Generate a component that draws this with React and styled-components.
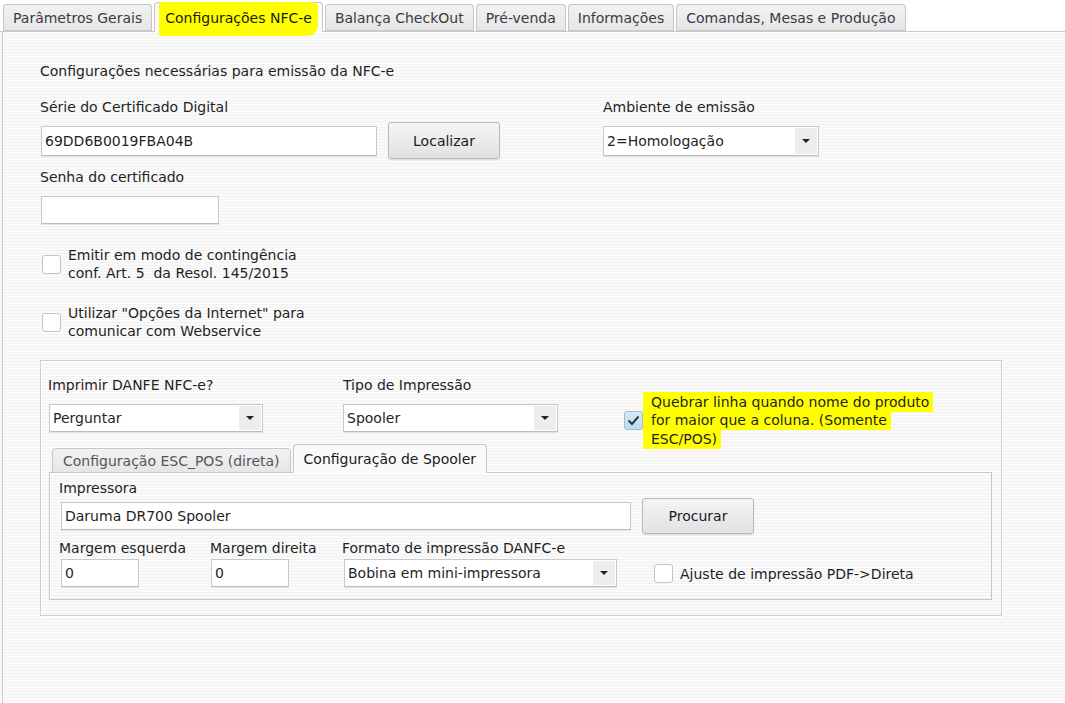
import React from 'react';
import styled, { createGlobalStyle } from 'styled-components';

const GlobalStyle = createGlobalStyle`
  html, body {
    margin: 0;
    padding: 0;
    height: 100%;
  }
  body {
    font-family: "DejaVu Sans", Verdana, sans-serif;
    font-size: 14px;
    color: #1f1f24;
    background: #f7f7f7;
    overflow: hidden;
  }
`;

const stripes = `repeating-linear-gradient(to bottom, #fafafa 0px, #fafafa 2px, #f2f2f2 2px, #f2f2f2 3px)`;

const Window = styled.div`
  width: 1065px;
  height: 703px;
  display: flex;
  flex-direction: column;
  background: ${stripes};
`;

const TabBar = styled.div`
  display: flex;
  align-items: flex-end;
  gap: 2px;
  height: 31px;
  padding-left: 3px;
  border-bottom: 1px solid #cacaca;
  background: #fff;
`;

const Tab = styled.div`
  position: relative;
  height: ${p => (p.$active ? '30px' : '27px')};
  margin-bottom: ${p => (p.$active ? '-1px' : '0')};
  padding: 0 ${p => (p.$active ? '10px' : '9px')};
  display: flex;
  align-items: center;
  border: 1px solid #c6c6c6;
  border-bottom: ${p => (p.$active ? 'none' : '1px solid #cacaca')};
  border-radius: 4px 4px 0 0;
  background: ${p => (p.$active ? '#fafafa' : 'linear-gradient(#f2f2f2, #e6e6e6)')};
  color: ${p => (p.$active ? '#1a1a1a' : '#3a3a44')};
  white-space: nowrap;
  box-sizing: border-box;
  z-index: ${p => (p.$active ? 2 : 1)};
`;

const Marker = styled.span`
  background: #ffff00;
  padding: 8px 6px 10px;
  margin: -8px -6px -10px;
  border-radius: 2px 6px 10px 3px;
  box-decoration-break: clone;
  -webkit-box-decoration-break: clone;
`;

const Panel = styled.div`
  flex: 1;
  margin-left: 2px;
  border-left: 1px solid #cacaca;
  padding: 30px 0 0 37px;
  display: flex;
  flex-direction: column;
  background: ${stripes};
`;

const Text = styled.div`
  line-height: 18px;
  white-space: nowrap;
  margin-bottom: ${p => p.$mb || 0}px;
`;

const TopArea = styled.div`
  display: flex;
  margin-top: 18px;
`;

const Column = styled.div`
  display: flex;
  flex-direction: column;
  width: ${p => (p.$w ? `${p.$w}px` : 'auto')};
`;

const Row = styled.div`
  display: flex;
  align-items: ${p => p.$align || 'center'};
  gap: ${p => p.$gap || 0}px;
`;

const Input = styled.div`
  width: ${p => p.$w}px;
  height: ${p => p.$h || 28}px;
  box-sizing: border-box;
  margin-left: ${p => p.$ml || 0}px;
  padding: 0 3px;
  display: flex;
  align-items: center;
  background: #fff;
  border: 1px solid #c8c8c8;
  border-bottom-color: #bcbcbc;
  box-shadow: 0 1px 0 #e4e4e4;
  white-space: nowrap;
`;

const Select = styled(Input)`
  padding: 0 1px 0 3px;
  justify-content: space-between;
`;

const DropButton = styled.span`
  width: 22px;
  align-self: stretch;
  margin: 1px 0;
  display: flex;
  align-items: center;
  justify-content: center;
  background: #ededed;
  &::after {
    content: '';
    border-left: 4px solid transparent;
    border-right: 4px solid transparent;
    border-top: 4px solid #222;
  }
`;

const Button = styled.div`
  width: 112px;
  height: ${p => p.$h || 37}px;
  box-sizing: border-box;
  display: flex;
  align-items: center;
  justify-content: center;
  border: 1px solid #b9b9b9;
  border-radius: 3px;
  background: linear-gradient(#f4f4f4, #e2e2e2);
  box-shadow: 0 1px 1px rgba(0, 0, 0, 0.12);
  color: #1a1a2a;
`;

const CheckRow = styled.div`
  display: flex;
  align-items: center;
  gap: ${p => (p.$gap !== undefined ? p.$gap : 7)}px;
  margin-left: 2px;
  margin-top: ${p => p.$mt || 0}px;
`;

const Box = styled.span`
  width: 19px;
  height: 19px;
  flex-shrink: 0;
  box-sizing: border-box;
  border: 1px solid ${p => (p.$checked ? '#a8bccc' : '#c4c4c4')};
  border-radius: 3px;
  background: ${p => (p.$checked ? 'linear-gradient(#d6eaf8, #bcdcf2)' : '#fff')};
  display: flex;
  align-items: center;
  justify-content: center;
`;

const GroupBox = styled.div`
  width: 962px;
  box-sizing: border-box;
  margin-top: 20px;
  padding: 15px 9px 15px 7px;
  border: 1px solid #cfcfcf;
  box-shadow: inset 1px 1px 0 #fff, 1px 1px 0 #fff;
  display: flex;
  flex-direction: column;
`;

const PrintRow = styled.div`
  display: flex;
  align-items: flex-end;
`;

const Highlight = styled.div`
  line-height: 18.5px;
  white-space: nowrap;
  & > span {
    background: #ffff00;
    padding: 2px 4px 2px 8px;
    box-decoration-break: clone;
    -webkit-box-decoration-break: clone;
  }
`;

const InnerTabs = styled.div`
  display: flex;
  align-items: flex-end;
  gap: 2px;
  margin-top: 12px;
  padding-left: 4px;
  position: relative;
  z-index: 1;
`;

const InnerTab = styled.div`
  height: ${p => (p.$active ? '29px' : '25px')};
  margin-bottom: -1px;
  box-sizing: border-box;
  padding: 0 10px;
  display: flex;
  align-items: center;
  border: 1px solid #c6c6c6;
  border-bottom: ${p => (p.$active ? '1px solid #fafafa' : '1px solid #c6c6c6')};
  border-radius: 4px 4px 0 0;
  background: ${p => (p.$active ? '#fafafa' : 'linear-gradient(#f2f2f2, #e6e6e6)')};
  color: ${p => (p.$active ? '#1a1a1a' : '#55555c')};
  white-space: nowrap;
`;

const InnerPanel = styled.div`
  margin-left: 1px;
  box-sizing: border-box;
  padding: 6px 10px 12px 9px;
  border: 1px solid #c6c6c6;
  box-shadow: inset 1px 1px 0 #fff;
  display: flex;
  flex-direction: column;
`;

const Check = () => (
  <svg width="13" height="11" viewBox="0 0 13 11">
    <path d="M1.5 5.5 L5 9 L11.5 1.5" fill="none" stroke="#2f3640" strokeWidth="2" />
  </svg>
);

export default function App() {
  return (
    <>
      <GlobalStyle />
      <Window>
        <TabBar>
          <Tab>Parâmetros Gerais</Tab>
          <Tab $active><Marker>Configurações NFC-e</Marker></Tab>
          <Tab>Balança CheckOut</Tab>
          <Tab>Pré-venda</Tab>
          <Tab>Informações</Tab>
          <Tab>Comandas, Mesas e Produção</Tab>
        </TabBar>

        <Panel>
          <Text>Configurações necessárias para emissão da NFC-e</Text>

          <TopArea>
            <Column $w={563}>
              <Text $mb={6}>Série do Certificado Digital</Text>
              <Row $gap={11}>
                <Input $w={336} $h={30} $ml={1}>69DD6B0019FBA04B</Input>
                <Button>Localizar</Button>
              </Row>
              <Text $mb={10} style={{ marginTop: 9 }}>Senha do certificado</Text>
              <Input $w={178} $ml={1} />

              <CheckRow $mt={22}>
                <Box />
                <Text>Emitir em modo de contingência<br />conf. Art. 5&nbsp; da Resol. 145/2015</Text>
              </CheckRow>
              <CheckRow $mt={22}>
                <Box />
                <Text>Utilizar "Opções da Internet" para<br />comunicar com Webservice</Text>
              </CheckRow>
            </Column>

            <Column>
              <Text $mb={10}>Ambiente de emissão</Text>
              <Select $w={216} $h={30}>2=Homologação<DropButton /></Select>
            </Column>
          </TopArea>

          <GroupBox>
            <PrintRow>
              <Column $w={295}>
                <Text $mb={10}>Imprimir DANFE NFC-e?</Text>
                <Select $w={214} $ml={1}>Perguntar<DropButton /></Select>
              </Column>
              <Column $w={279}>
                <Text $mb={10}>Tipo de Impressão</Text>
                <Select $w={215}>Spooler<DropButton /></Select>
              </Column>
              <CheckRow $gap={0} style={{ marginBottom: -16 }}>
                <Box $checked><Check /></Box>
                <Highlight>
                  <span>Quebrar linha quando nome do produto<br />for maior que a coluna. (Somente<br />ESC/POS)</span>
                </Highlight>
              </CheckRow>
            </PrintRow>

            <InnerTabs>
              <InnerTab>Configuração ESC_POS (direta)</InnerTab>
              <InnerTab $active>Configuração de Spooler</InnerTab>
            </InnerTabs>
            <InnerPanel>
              <Text $mb={1}>Impressora</Text>
              <Row $gap={11}>
                <Input $w={570} $ml={2}>Daruma DR700 Spooler</Input>
                <Button $h={36}>Procurar</Button>
              </Row>
              <Row $align="flex-end" style={{ marginTop: 5 }}>
                <Column $w={151}>
                  <Text $mb={2}>Margem esquerda</Text>
                  <Input $w={78} $ml={2}>0</Input>
                </Column>
                <Column $w={132}>
                  <Text $mb={2}>Margem direita</Text>
                  <Input $w={78} $ml={1}>0</Input>
                </Column>
                <Column $w={310}>
                  <Text $mb={2}>Formato de impressão DANFC-e</Text>
                  <Select $w={273} $ml={2}>Bobina em mini-impressora<DropButton /></Select>
                </Column>
                <CheckRow style={{ marginBottom: 4 }}>
                  <Box />
                  <Text>Ajuste de impressão PDF-&gt;Direta</Text>
                </CheckRow>
              </Row>
            </InnerPanel>
          </GroupBox>
        </Panel>
      </Window>
    </>
  );
}
